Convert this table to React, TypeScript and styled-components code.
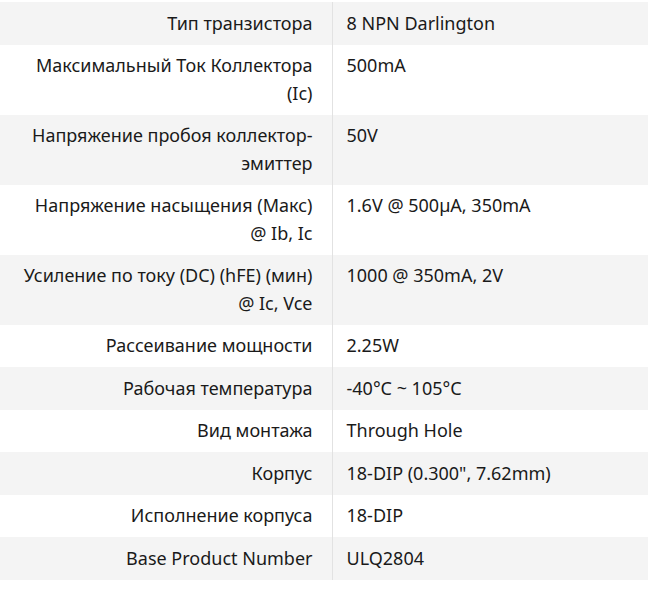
import React from 'react';
import styled, { createGlobalStyle } from 'styled-components';

interface Spec {
  label: string;
  value: string;
}

const specs: Spec[] = [
  { label: 'Тип транзистора', value: '8 NPN Darlington' },
  { label: 'Максимальный Ток Коллектора (Ic)', value: '500mA' },
  { label: 'Напряжение пробоя коллектор-эмиттер', value: '50V' },
  { label: 'Напряжение насыщения (Макс) @ Ib, Ic', value: '1.6V @ 500µA, 350mA' },
  { label: 'Усиление по току (DC) (hFE) (мин) @ Ic, Vce', value: '1000 @ 350mA, 2V' },
  { label: 'Рассеивание мощности', value: '2.25W' },
  { label: 'Рабочая температура', value: '-40°C ~ 105°C' },
  { label: 'Вид монтажа', value: 'Through Hole' },
  { label: 'Корпус', value: '18-DIP (0.300", 7.62mm)' },
  { label: 'Исполнение корпуса', value: '18-DIP' },
  { label: 'Base Product Number', value: 'ULQ2804' },
];

const GlobalStyle = createGlobalStyle`
  body {
    margin: 0;
    background: #ffffff;
    font-family: "Noto Sans", sans-serif;
  }
`;

const SpecTable = styled.table`
  width: 648px;
  margin-top: 2px;
  border-collapse: collapse;
  table-layout: fixed;
  font-size: 18px;
  line-height: 27.5px;
  color: #1a1a1a;
`;

const Row = styled.tr<{ $striped: boolean }>`
  background: ${(p) => (p.$striped ? '#f4f4f4' : '#ffffff')};
`;

const Label = styled.td`
  width: 332px;
  box-sizing: border-box;
  padding: 7.5px 19px 7.5px 16px;
  text-align: right;
  vertical-align: top;
  border-right: 1px solid #e2e2e2;
`;

const Value = styled.td`
  padding: 7.5px 14px;
  text-align: left;
  vertical-align: top;
`;

const App: React.FC = () => {
  return (
    <>
      <GlobalStyle />
      <SpecTable>
        <tbody>
          {specs.map((spec, i) => (
            <Row key={spec.label} $striped={i % 2 === 0}>
              <Label>{spec.label}</Label>
              <Value>{spec.value}</Value>
            </Row>
          ))}
        </tbody>
      </SpecTable>
    </>
  );
};

export default App;
